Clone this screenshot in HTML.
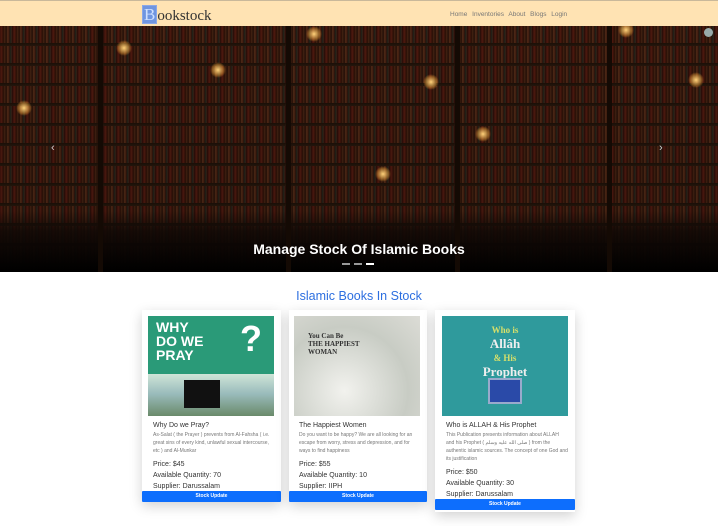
<!DOCTYPE html>
<html><head><meta charset="utf-8"><style>
*{margin:0;padding:0;box-sizing:border-box}
body{width:718px;height:526px;overflow:hidden;background:#fff;font-family:"Liberation Sans",sans-serif;position:relative}
.nav{position:absolute;left:0;top:0;width:718px;height:26px;background:#ffe3b3;border-top:1px solid #c9b89a}
.logo{position:absolute;left:142px;top:4px;font-family:"Liberation Serif",serif;font-size:15px;color:#333}
.logo b{display:inline-block;background:#6f95e0;color:#cfe0ff;font-weight:normal;padding:0 1px;font-size:17px;line-height:17px;border:1px solid #8aa8e8}
.links{position:absolute;left:450px;top:10px;font-size:6.5px;color:#777;word-spacing:3px}
.hero{position:absolute;left:0;top:26px;width:718px;height:246px;overflow:hidden;
background:
linear-gradient(to bottom,rgba(0,0,0,.35) 0,rgba(0,0,0,.4) 185px,rgba(15,8,5,.92) 205px,#000 246px),
repeating-linear-gradient(to bottom,rgba(0,0,0,0) 0,rgba(0,0,0,0) 17px,#2a180c 17px,#3a2212 20px),
repeating-linear-gradient(to right,#5a1a10 0,#7a2a18 2px,#3a1208 3px,#6b3a1e 5px,#2a0e06 6px,#8a4a28 8px,#4a1a0e 9px,#2e3a2a 11px,#6a2418 12px,#1a0a04 13px);
}
.post{position:absolute;top:0;width:5px;height:246px;background:#140a04}
.glow{position:absolute;width:16px;height:16px;border-radius:50%;background:radial-gradient(#ffd27a,rgba(255,170,60,.4) 50%,rgba(0,0,0,0) 70%)}
.htitle{position:absolute;left:0;width:718px;top:241px;text-align:center;color:#fff;font-weight:bold;font-size:14px}
.ind{position:absolute;top:263px;width:8px;height:2px;background:#999}
.card{position:absolute;background:#fff;box-shadow:0 4px 12px rgba(0,0,0,.18)}
.img{position:absolute;left:6px;top:6px;width:126px;height:100px}
.t{position:absolute;left:11px;font-size:7px;color:#333}
.d{position:absolute;left:11px;width:122px;font-size:5px;line-height:8px;color:#777}
.p{position:absolute;left:11px;font-size:7px;color:#333;line-height:11px}
.btn{position:absolute;left:0;width:139px;height:11px;background:#0d6efd;color:#fff;font-size:5px;font-weight:bold;text-align:center;line-height:11px;border-radius:1px}
h2{position:absolute;left:0;width:718px;top:289px;text-align:center;font-weight:normal;font-size:12.5px;color:#2d6fe0}
</style></head><body>
<div class="nav"><div class="logo"><b>B</b>ookstock</div><div class="links">Home Inventories About Blogs Login</div></div>
<div class="hero">
<div class="post" style="left:98px"></div><div class="post" style="left:286px"></div><div class="post" style="left:455px"></div><div class="post" style="left:607px"></div>
<div class="glow" style="left:116px;top:14px"></div><div class="glow" style="left:210px;top:36px"></div><div class="glow" style="left:306px;top:0px"></div>
<div class="glow" style="left:16px;top:74px"></div><div class="glow" style="left:423px;top:48px"></div><div class="glow" style="left:475px;top:100px"></div>
<div class="glow" style="left:375px;top:140px"></div><div class="glow" style="left:688px;top:46px"></div><div class="glow" style="left:618px;top:-4px"></div>
<div style="position:absolute;left:704px;top:2px;width:9px;height:9px;border-radius:50%;background:#9aa"></div>
<div style="position:absolute;left:51px;top:116px;color:#ccc;font-size:11px">‹</div>
<div style="position:absolute;left:659px;top:116px;color:#ccc;font-size:11px">›</div>
</div>
<div class="htitle">Manage Stock Of Islamic Books</div>
<div class="ind" style="left:342px"></div><div class="ind" style="left:354px"></div><div class="ind" style="left:366px;background:#fff"></div>
<h2>Islamic Books In Stock</h2>

<div class="card" style="left:142px;top:310px;width:139px;height:192px">
<div class="img" style="background:linear-gradient(#2a9a78 0,#2a9a78 58%,#cfe5d8 58%,#9bb 78%,#6a8a6a 100%)">
<div style="position:absolute;left:8px;top:4px;color:#fff;font-weight:bold;font-size:14px;line-height:14px">WHY<br>DO WE<br>PRAY</div>
<div style="position:absolute;left:92px;top:2px;color:#fff;font-weight:bold;font-size:36px">?</div>
<div style="position:absolute;left:36px;top:64px;width:36px;height:28px;background:#111"></div></div>
<div class="t" style="top:112px">Why Do we Pray?</div>
<div class="d" style="top:121px">As-Salat ( the Prayer ) prevents from Al-Fahsha ( i.e. great sins of every kind, unlawful sexual intercourse, etc ) and Al-Munkar</div>
<div class="p" style="top:149px">Price: $45<br>Available Quantity: 70<br>Supplier: Darussalam</div>
<div class="btn" style="top:181px">Stock Update</div></div>

<div class="card" style="left:289px;top:310px;width:138px;height:192px">
<div class="img" style="left:5px;background:radial-gradient(circle at 40% 75%,#f2f2ee,#c8ccc4 60%,#dcdcd6)">
<div style="position:absolute;left:14px;top:16px;color:#333;font-family:'Liberation Serif',serif;font-weight:bold;font-size:7px;line-height:8px">You Can Be<br>THE HAPPIEST<br>WOMAN</div></div>
<div class="t" style="top:112px;left:10px">The Happiest Women</div>
<div class="d" style="top:121px;left:10px">Do you want to be happy? We are all looking for an escape from worry, stress and depression, and for ways to find happiness</div>
<div class="p" style="top:149px;left:10px">Price: $55<br>Available Quantity: 10<br>Supplier: IIPH</div>
<div class="btn" style="top:181px;width:138px">Stock Update</div></div>

<div class="card" style="left:435px;top:310px;width:140px;height:202px">
<div class="img" style="left:7px;background:#2f9a9c">
<div style="position:absolute;left:0;width:126px;top:6px;text-align:center;color:#eee;font-family:'Liberation Serif',serif;font-weight:bold;font-size:13px;line-height:13px"><span style="color:#d7e06a;font-size:9px">Who is</span><br>Allâh<br><span style="color:#d7e06a;font-size:9px">&amp; His</span><br>Prophet</div>
<div style="position:absolute;left:46px;top:62px;width:34px;height:26px;background:#2a4aa8;border:2px solid #9ac"></div></div>
<div class="t" style="top:112px">Who is ALLAH &amp; His Prophet</div>
<div class="d" style="top:121px">This Publication presents information about ALLAH and his Prophet ( صلى الله عليه وسلم ) from the authentic islamic sources. The concept of one God and its justification</div>
<div class="p" style="top:157px">Price: $50<br>Available Quantity: 30<br>Supplier: Darussalam</div>
<div class="btn" style="top:189px;width:140px">Stock Update</div></div>
</body></html>
